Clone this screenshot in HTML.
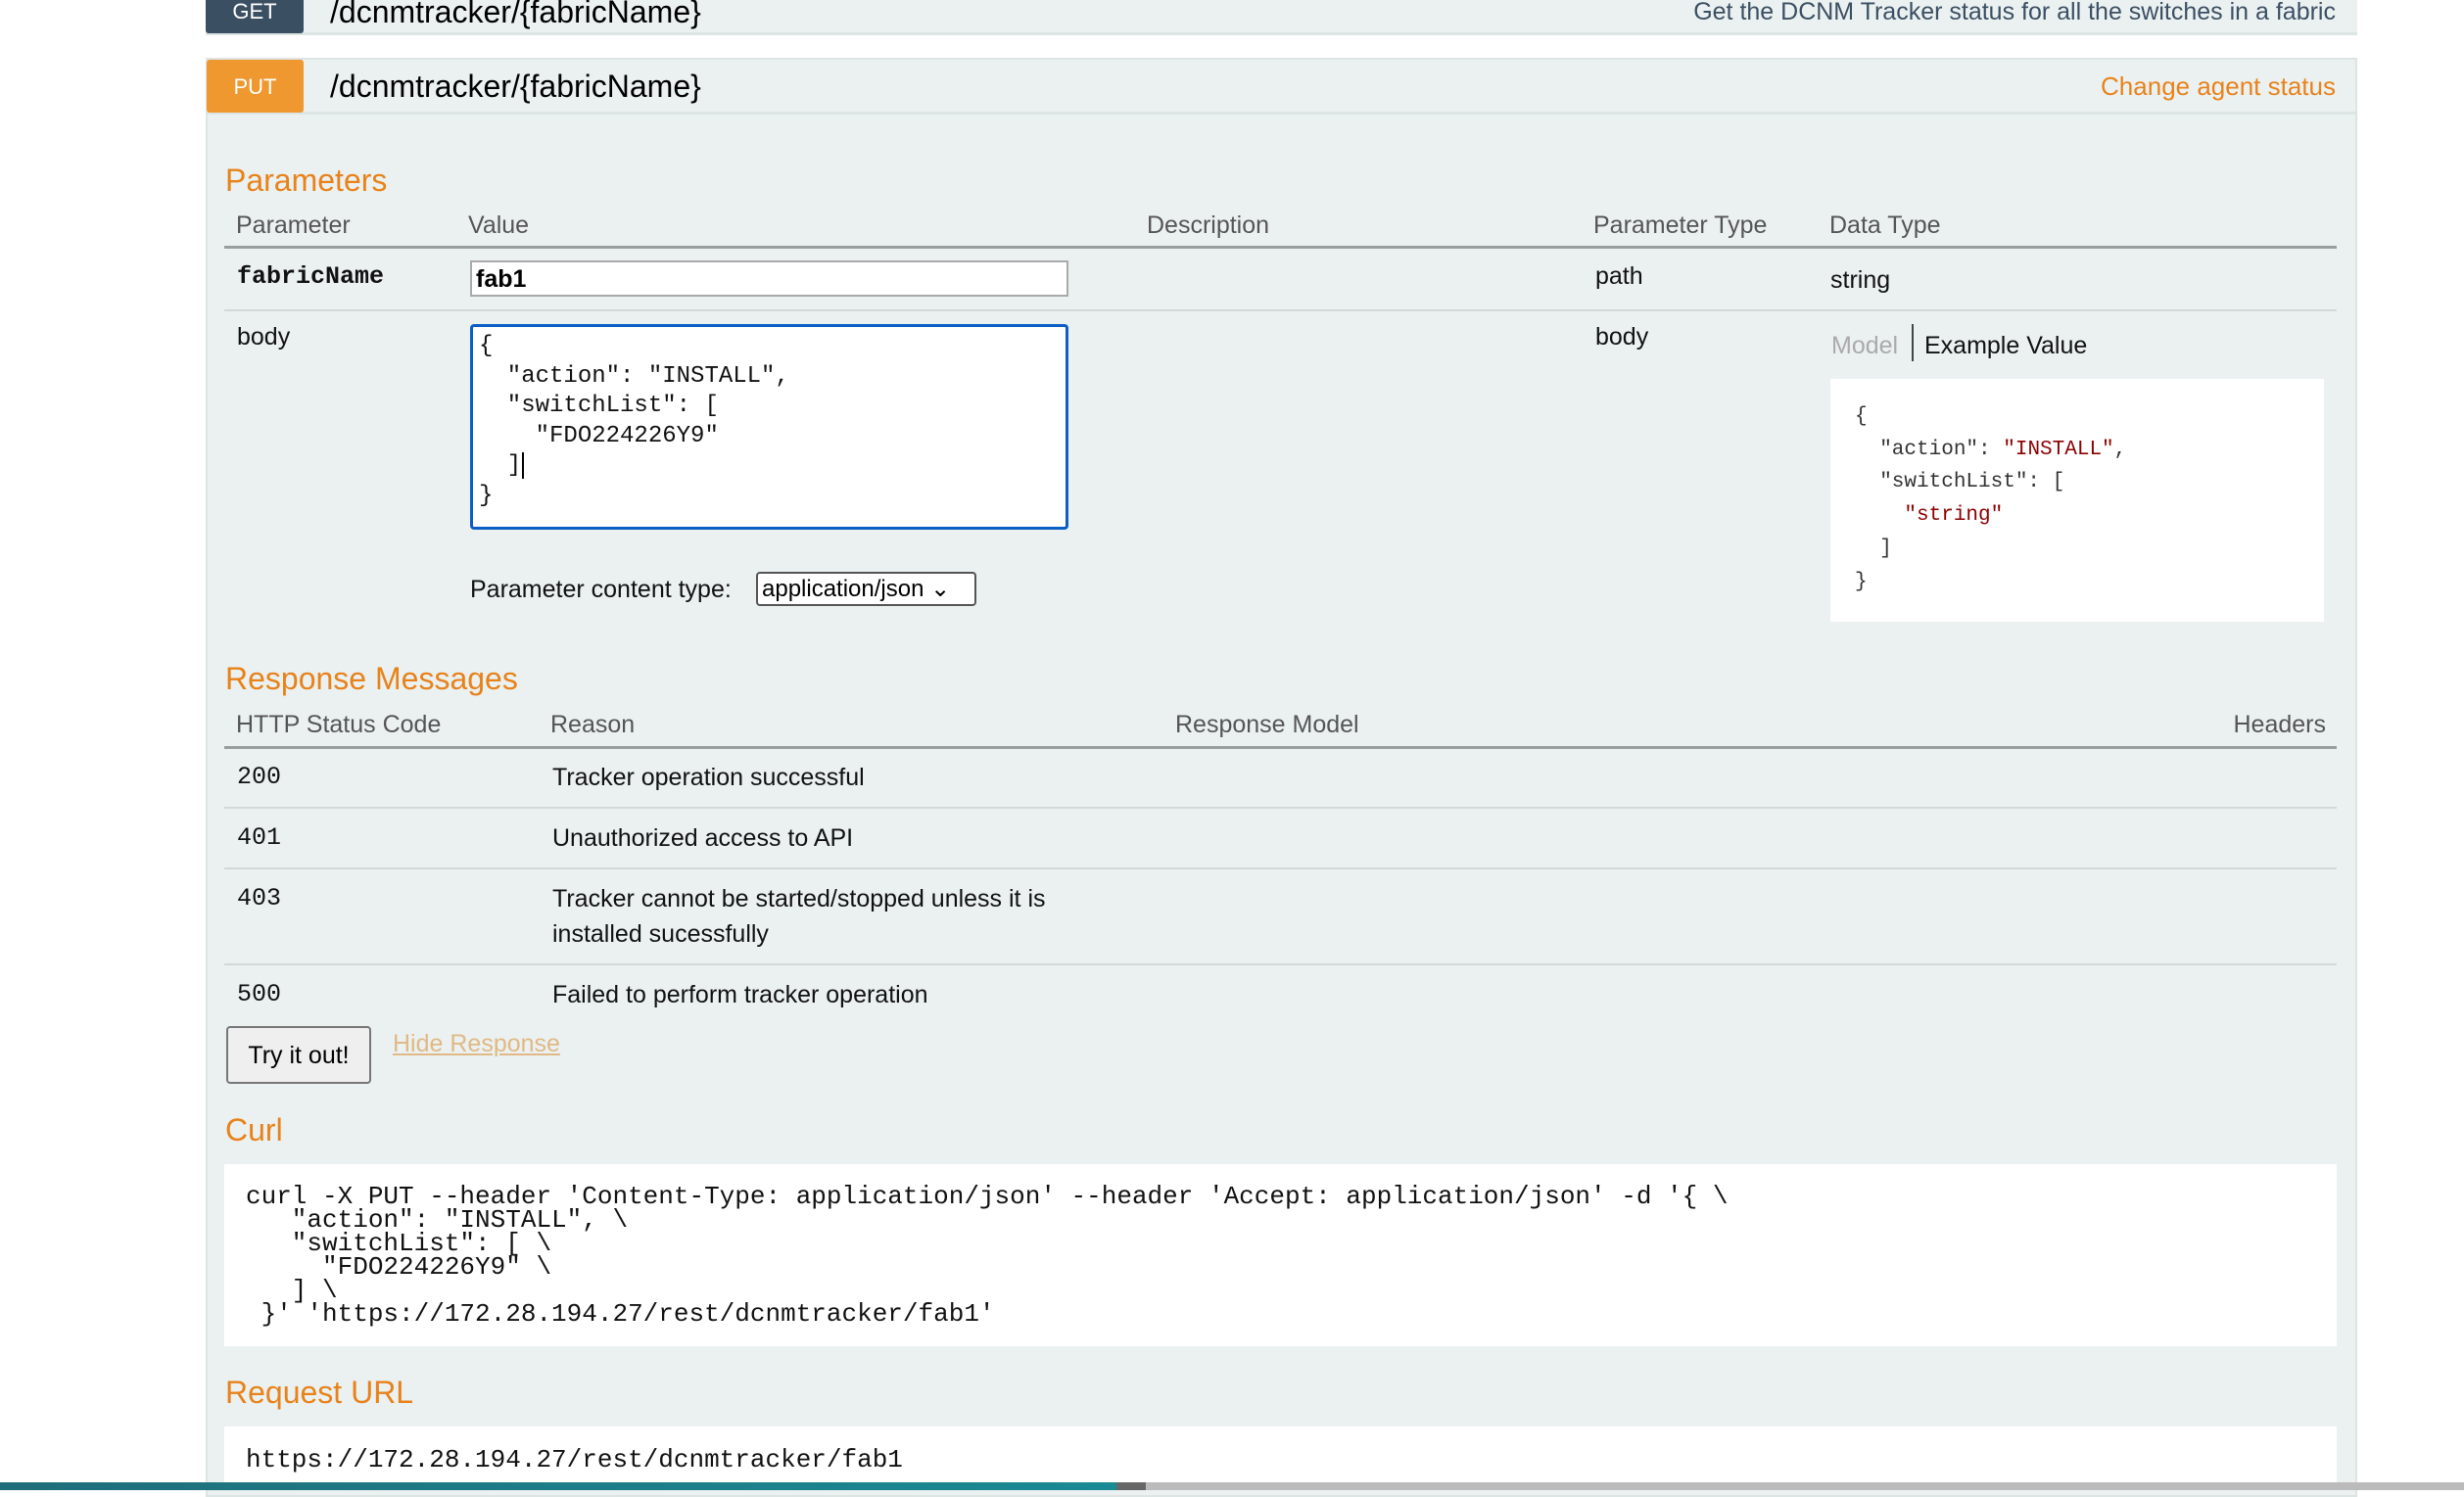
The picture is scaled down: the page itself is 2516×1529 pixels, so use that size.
<!DOCTYPE html>
<html><head><meta charset="utf-8"><style>
*{box-sizing:border-box;margin:0;padding:0}
body{width:2516px;height:1522px;overflow:hidden;background:#fff;font-family:"Liberation Sans",sans-serif;position:relative;color:#000}
.a{position:absolute;white-space:nowrap}
.or{color:#e8821a;font-size:32px}
.th{color:#555;font-size:25px}
.td{font-size:25px;color:#111}
.mono{font-family:"Liberation Mono",monospace}
.hl{position:absolute;left:229px;width:2157px;height:2px;background:#d3d7d7}
</style></head><body>
<div class="a" style="left:210px;top:-10px;width:2197px;height:46px;background:#ebf1f1;border-bottom:3px solid #dde4e4"></div>
<div class="a" style="left:210px;top:-10px;width:100px;height:44px;background:#3b4f63;border-radius:0 0 3px 3px;color:#fff;font-size:22px;text-align:center;line-height:40px;padding-top:2px">GET</div>
<div class="a" style="left:337px;top:-8px;font-size:32px;line-height:40px">/dcnmtracker/{fabricName}</div>
<div class="a" style="right:131px;top:-6px;font-size:25px;color:#3b4f63;line-height:36px">Get the DCNM Tracker status for all the switches in a fabric</div>
<div class="a" style="left:210px;top:59px;width:2197px;height:1470px;background:#ebf1f1;border:2px solid #dde4e4"></div>
<div class="a" style="left:210px;top:114px;width:2197px;height:3px;background:#dde4e4"></div>
<div class="a" style="left:211px;top:61px;width:99px;height:54px;background:#ef982f;border-radius:3px;color:#fff;font-size:22px;text-align:center;line-height:56px">PUT</div>
<div class="a" style="left:337px;top:68px;font-size:32px;line-height:40px">/dcnmtracker/{fabricName}</div>
<div class="a" style="right:131px;top:70px;font-size:26px;color:#e8821a;line-height:36px">Change agent status</div>

<div class="a or" style="left:230px;top:166px">Parameters</div>
<div class="a th" style="left:241px;top:216px">Parameter</div>
<div class="a th" style="left:478px;top:216px">Value</div>
<div class="a th" style="left:1171px;top:216px">Description</div>
<div class="a th" style="left:1627px;top:216px">Parameter Type</div>
<div class="a th" style="left:1868px;top:216px">Data Type</div>
<div class="hl" style="top:251px;height:3px;background:#9a9d9d"></div>
<div class="a td mono" style="left:242px;top:268px;font-weight:bold;font-size:25px">fabricName</div>
<div class="a" style="left:480px;top:266px;width:611px;height:37px;background:#fff;border:2px solid #aaa;font-size:25px;font-weight:bold;padding-left:4px;line-height:35px">fab1</div>
<div class="a td" style="left:1629px;top:268px">path</div>
<div class="a td" style="left:1869px;top:272px">string</div>
<div class="hl" style="top:316px"></div>
<div class="a td" style="left:242px;top:330px">body</div>
<div class="a mono" style="left:480px;top:331px;width:611px;height:210px;background:#fff;border:3px solid #0b5fc4;border-radius:4px;font-size:24px;line-height:30.5px;padding:5px 0 0 6px;white-space:pre;color:#111">{
  "action": "INSTALL",
  "switchList": [
    "FDO224226Y9"
  ]<span style="border-left:2px solid #000;margin-left:1px"></span>
}</div>
<div class="a td" style="left:1629px;top:330px">body</div>
<div class="a" style="left:1870px;top:339px;font-size:25px;color:#aaa">Model</div>
<div class="a" style="left:1952px;top:331px;width:2px;height:38px;background:#444"></div>
<div class="a td" style="left:1965px;top:339px">Example Value</div>
<div class="a mono" style="left:1869px;top:387px;width:504px;height:248px;background:#fff;font-size:21px;line-height:33.7px;padding:22px 0 0 25px;white-space:pre;color:#333">{
  "action": <span style="color:#8b0000">"INSTALL"</span>,
  "switchList": [
    <span style="color:#8b0000">"string"</span>
  ]
}</div>
<div class="a td" style="left:480px;top:588px">Parameter content type:</div>
<div class="a" style="left:772px;top:584px;width:225px;height:35px;background:#fff;border:2px solid #555;border-radius:4px;font-size:24px;line-height:31px;padding-left:4px">application/json ⌄</div>

<div class="a or" style="left:230px;top:675px">Response Messages</div>
<div class="a th" style="left:241px;top:726px">HTTP Status Code</div>
<div class="a th" style="left:562px;top:726px">Reason</div>
<div class="a th" style="right:141px;top:726px">Headers</div>
<div class="a th" style="left:1200px;top:726px">Response Model</div>
<div class="hl" style="top:762px;height:3px;background:#9a9d9d"></div>
<div class="a td mono" style="left:242px;top:779px">200</div>
<div class="a td" style="left:564px;top:780px">Tracker operation successful</div>
<div class="hl" style="top:824px"></div>
<div class="a td mono" style="left:242px;top:841px">401</div>
<div class="a td" style="left:564px;top:842px">Unauthorized access to API</div>
<div class="hl" style="top:886px"></div>
<div class="a td mono" style="left:242px;top:903px">403</div>
<div class="a td" style="left:564px;top:900px;line-height:36px;white-space:normal;width:560px">Tracker cannot be started/stopped unless it is installed sucessfully</div>
<div class="hl" style="top:984px"></div>
<div class="a td mono" style="left:242px;top:1001px">500</div>
<div class="a td" style="left:564px;top:1002px">Failed to perform tracker operation</div>
<div class="a" style="left:231px;top:1048px;width:148px;height:59px;background:#efefef;border:2px solid #777;border-radius:4px;font-size:25px;text-align:center;line-height:57px">Try it out!</div>
<div class="a" style="left:401px;top:1052px;font-size:25px;color:#e0b985;text-decoration:underline">Hide Response</div>

<div class="a or" style="left:230px;top:1136px">Curl</div>
<div class="a mono" style="left:229px;top:1189px;width:2157px;height:186px;background:#fff;font-size:26px;line-height:24px;padding:21px 0 0 22px;white-space:pre;color:#111">curl -X PUT --header 'Content-Type: application/json' --header 'Accept: application/json' -d '{ \
   "action": "INSTALL", \
   "switchList": [ \
     "FDO224226Y9" \
   ] \
 }' 'https://172.28.194.27/rest/dcnmtracker/fab1'</div>
<div class="a or" style="left:230px;top:1404px">Request URL</div>
<div class="a mono" style="left:229px;top:1457px;width:2157px;height:60px;background:#fff;font-size:26px;padding:19px 0 0 22px;color:#111">https://172.28.194.27/rest/dcnmtracker/fab1</div>
<div class="a" style="left:0;top:1514px;width:1140px;height:8px;background:linear-gradient(90deg,#1f6e7a,#1a8a94)"></div>
<div class="a" style="left:1140px;top:1514px;width:30px;height:8px;background:#666"></div>
<div class="a" style="left:1170px;top:1514px;width:1346px;height:8px;background:#bbb"></div>
</body></html>
